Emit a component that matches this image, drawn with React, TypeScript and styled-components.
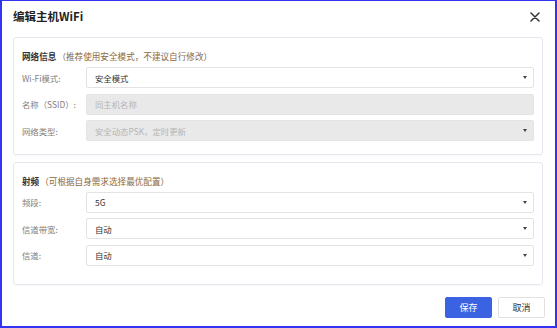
import React from "react";
import styled, { createGlobalStyle } from "styled-components";

const GlobalStyle = createGlobalStyle`
  html, body {
    margin: 0;
    padding: 0;
    background: #ffffff;
  }
  body {
    font-family: "Noto Sans CJK SC", "Noto Sans", sans-serif;
    color: #333;
  }
  * {
    box-sizing: border-box;
  }
`;

type Field = {
  label: string;
  value: string;
  disabled?: boolean;
  arrow?: boolean;
};

const networkFields: Field[] = [
  { label: "Wi-Fi模式:", value: "安全模式", arrow: true },
  { label: "名称（SSID）:", value: "同主机名称", disabled: true },
  { label: "网络类型:", value: "安全动态PSK，定时更新", disabled: true, arrow: true },
];

const radioFields: Field[] = [
  { label: "频段:", value: "5G", arrow: true },
  { label: "信道带宽:", value: "自动", arrow: true },
  { label: "信道:", value: "自动", arrow: true },
];

const Section = ({
  title,
  hint,
  fields,
  tall,
}: {
  title: string;
  hint: string;
  fields: Field[];
  tall?: boolean;
}) => (
  <Card $tall={tall}>
    <CardHeader>
      <CardTitle>{title}</CardTitle>
      <Hint>{hint}</Hint>
    </CardHeader>
    <Rows>
      {fields.map((f) => (
        <Row key={f.label}>
          <Label>{f.label}</Label>
          <Select $disabled={f.disabled}>
            <SelectText $disabled={f.disabled}>{f.value}</SelectText>
            {f.arrow && <Caret />}
          </Select>
        </Row>
      ))}
    </Rows>
  </Card>
);

export default function App() {
  return (
    <>
      <GlobalStyle />
      <Window>
        <TitleBar>
          <Title>编辑主机WiFi</Title>
          <CloseButton aria-label="close">
            <svg width="10" height="10" viewBox="0 0 10 10">
              <path d="M1 1 L9 9 M9 1 L1 9" stroke="#333" strokeWidth="1.5" strokeLinecap="round" />
            </svg>
          </CloseButton>
        </TitleBar>
        <Body>
          <Section title="网络信息" hint="（推荐使用安全模式，不建议自行修改）" fields={networkFields} />
          <Section title="射频" hint="（可根据自身需求选择最优配置）" fields={radioFields} tall />
        </Body>
        <Footer>
          <Button $primary>保存</Button>
          <Button>取消</Button>
        </Footer>
      </Window>
    </>
  );
}

const Window = styled.div`
  width: 557px;
  height: 328px;
  border: 2px solid #3333f2;
  border-top-width: 1px;
  display: flex;
  flex-direction: column;
  background: #fff;
`;

const TitleBar = styled.div`
  height: 32px;
  display: flex;
  align-items: center;
  justify-content: space-between;
  padding: 0 14px 0 11px;
`;

const Title = styled.h1`
  margin: 0;
  font-size: 11.5px;
  font-weight: 700;
  color: #222;
  line-height: 1;
`;

const CloseButton = styled.div`
  width: 12px;
  height: 12px;
  display: flex;
  align-items: center;
  justify-content: center;
`;

const Body = styled.div`
  margin-top: 4px;
  padding: 0 12px 0 11px;
  display: flex;
  flex-direction: column;
  gap: 6.5px;
`;

const Card = styled.div<{ $tall?: boolean }>`
  border: 1px solid #e6e8f0;
  border-radius: 3px;
  padding: 11px 8px ${(p) => (p.$tall ? "18px" : "13px")} 8px;
  box-shadow: 0 1px 2px rgba(0, 0, 0, 0.03);
`;

const CardHeader = styled.div`
  display: flex;
  align-items: center;
  height: 14px;
  margin-bottom: 4px;
  font-size: 8.6px;
  line-height: 14px;
`;

const CardTitle = styled.span`
  font-weight: 700;
  color: #333;
`;

const Hint = styled.span`
  color: #8a6a3f;
  margin-left: 1px;
`;

const Rows = styled.div`
  display: flex;
  flex-direction: column;
  gap: 5.5px;
`;

const Row = styled.div`
  display: flex;
  align-items: center;
  height: 21px;
`;

const Label = styled.div`
  width: 64px;
  flex-shrink: 0;
  font-size: 8.4px;
  color: #808080;
  white-space: nowrap;
`;

const Select = styled.div<{ $disabled?: boolean }>`
  flex: 1;
  height: 21px;
  border: 1px solid ${(p) => (p.$disabled ? "#e4e4e4" : "#e3e3e3")};
  border-radius: 2px;
  background: ${(p) => (p.$disabled ? "#e9e9e9" : "#fff")};
  display: flex;
  align-items: center;
  justify-content: space-between;
  padding: 0 6px 0 8px;
`;

const SelectText = styled.span<{ $disabled?: boolean }>`
  font-size: 8.4px;
  color: ${(p) => (p.$disabled ? "#b5b5b5" : "#333")};
`;

const Caret = styled.span`
  width: 0;
  height: 0;
  border-left: 2.5px solid transparent;
  border-right: 2.5px solid transparent;
  border-top: 3px solid #444;
`;

const Footer = styled.div`
  margin-top: auto;
  display: flex;
  justify-content: flex-end;
  gap: 6px;
  padding: 0 10px 8px 0;
`;

const Button = styled.div<{ $primary?: boolean }>`
  width: 47px;
  height: 21px;
  display: flex;
  align-items: center;
  justify-content: center;
  font-size: 9px;
  border-radius: 2px;
  background: ${(p) => (p.$primary ? "#3b62e0" : "#fff")};
  color: ${(p) => (p.$primary ? "#fff" : "#333")};
  border: 1px solid ${(p) => (p.$primary ? "#3b62e0" : "#e0e0e0")};
`;
